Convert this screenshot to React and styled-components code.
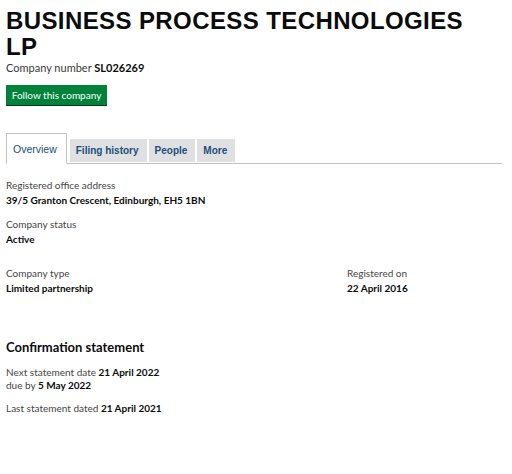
import React from 'react';
import styled, { createGlobalStyle } from 'styled-components';

const GlobalStyle = createGlobalStyle`
  body {
    margin: 0;
    background: #ffffff;
    color: #0b0c0c;
    font-family: Lato, "Liberation Sans", Arial, sans-serif;
  }
`;

const Page = styled.div`
  width: 496px;
  padding: 0 10px 0 6px;
`;

const Title = styled.h1`
  margin: 8px 0 0;
  max-width: 475px;
  font-family: "Liberation Sans", Arial, sans-serif;
  font-size: 24px;
  line-height: 26px;
  font-weight: 700;
  letter-spacing: 0.4px;
  color: #0b0c0c;
`;

const CompanyNumber = styled.p`
  margin: 0;
  font-size: 11px;
  line-height: 15px;
  color: #3a3a3a;

  strong {
    color: #0b0c0c;
    font-weight: 700;
  }
`;

const FollowButton = styled.button`
  display: block;
  margin-top: 10px;
  width: 101px;
  height: 20px;
  padding: 0;
  border: none;
  border-radius: 0;
  background: #00823b;
  box-shadow: 0 1px 0 #003618;
  color: #ffffff;
  font-family: Lato, "Liberation Sans", Arial, sans-serif;
  font-size: 10px;
  cursor: pointer;
`;

const TabList = styled.ul`
  list-style: none;
  margin: 28px 0 0;
  padding: 0;
  display: flex;
  align-items: flex-end;
  gap: 2px;
  border-bottom: 1px solid #bfc1c3;
`;

const Tab = styled.li`
  display: flex;
  align-items: center;
  font-family: "Liberation Sans", Arial, sans-serif;
  color: #1d4e79;
  height: ${(p) => (p.$active ? '28px' : '23px')};
  margin-bottom: ${(p) => (p.$active ? '-1px' : '1px')};
  margin-right: ${(p) => (p.$active ? '1px' : '0')};
  padding: ${(p) => (p.$active ? '1px 9px 0 6px' : '0 8px 0 6px')};
  background: ${(p) => (p.$active ? '#ffffff' : '#dee0e2')};
  border: ${(p) => (p.$active ? '1px solid #bfc1c3' : 'none')};
  border-bottom: ${(p) => (p.$active ? '1px solid #ffffff' : 'none')};
  font-size: ${(p) => (p.$active ? '10.5px' : '10px')};
  font-weight: ${(p) => (p.$active ? 400 : 700)};
`;

const Details = styled.div`
  margin-top: 14px;
`;

const Field = styled.div`
  margin-top: ${(p) => p.$gap || 0}px;
  font-size: 10px;
  line-height: 15px;
`;

const Label = styled.div`
  color: #454545;
`;

const Value = styled.div`
  color: #0b0c0c;
  font-weight: 700;
`;

const FieldRow = styled.div`
  display: grid;
  grid-template-columns: 341px 1fr;
  margin-top: 19px;
`;

const Heading = styled.h2`
  margin: 42px 0 0;
  font-size: 13px;
  line-height: 18px;
  font-weight: 700;
  color: #0b0c0c;
`;

const Statement = styled.p`
  margin: 10px 0 0;
  font-size: 10px;
  line-height: 13px;
  color: #454545;

  strong {
    color: #0b0c0c;
    font-weight: 700;
  }
`;

const tabs = ['Overview', 'Filing history', 'People', 'More'];

export default function App() {
  return (
    <>
      <GlobalStyle />
      <Page>
        <Title>BUSINESS PROCESS TECHNOLOGIES LP</Title>
        <CompanyNumber>
          Company number <strong>SL026269</strong>
        </CompanyNumber>
        <FollowButton>Follow this company</FollowButton>

        <TabList>
          {tabs.map((tab, i) => (
            <Tab key={tab} $active={i === 0}>
              {tab}
            </Tab>
          ))}
        </TabList>

        <Details>
          <Field>
            <Label>Registered office address</Label>
            <Value>39/5 Granton Crescent, Edinburgh, EH5 1BN</Value>
          </Field>
          <Field $gap={9}>
            <Label>Company status</Label>
            <Value>Active</Value>
          </Field>
          <FieldRow>
            <Field>
              <Label>Company type</Label>
              <Value>Limited partnership</Value>
            </Field>
            <Field>
              <Label>Registered on</Label>
              <Value>22 April 2016</Value>
            </Field>
          </FieldRow>
        </Details>

        <Heading>Confirmation statement</Heading>
        <Statement>
          Next statement date <strong>21 April 2022</strong>
          <br />
          due by <strong>5 May 2022</strong>
        </Statement>
        <Statement>
          Last statement dated <strong>21 April 2021</strong>
        </Statement>
      </Page>
    </>
  );
}
